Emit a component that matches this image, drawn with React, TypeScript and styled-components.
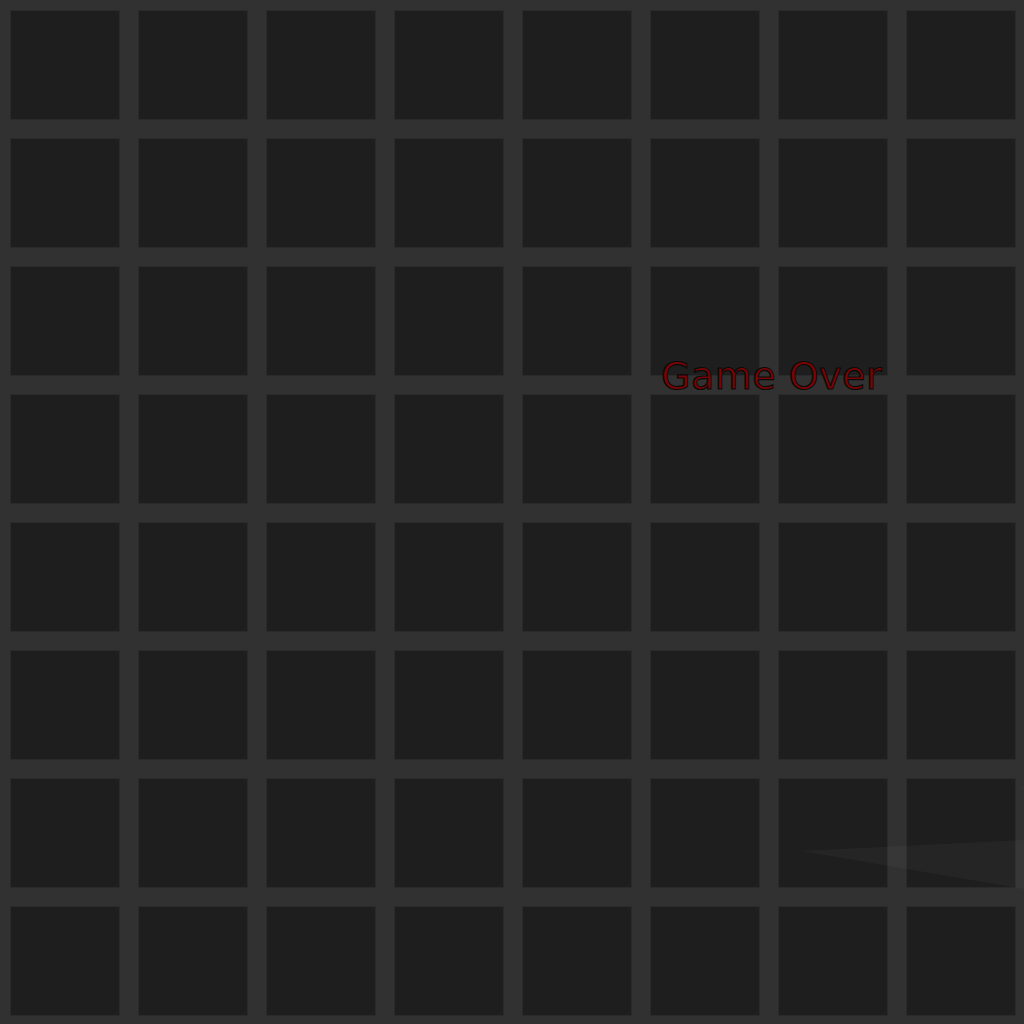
import React from "react";
import styled, { createGlobalStyle } from "styled-components";

const Global = createGlobalStyle`
  html, body { margin: 0; padding: 0; background: #313131; }
  body { width: 1024px; height: 1024px; overflow: hidden; }
`;

const Board = styled.div`
  position: relative;
  width: 1024px;
  height: 1024px;
  box-sizing: border-box;
  padding: 11px 9px 9px 11px;
  background: #313131;
  display: grid;
  grid-template-columns: repeat(8, 108px);
  grid-template-rows: repeat(8, 108px);
  gap: 20px;
`;

const Cell = styled.div`
  background: #1e1e1e;
  box-shadow: 0 0 0 1px #2a2a2a;
`;

const Message = styled.div`
  position: absolute;
  left: 661px;
  top: 350px;
  font-family: "DejaVu Sans", "Noto Sans", sans-serif;
  font-size: 38px;
  line-height: 52px;
  color: #7a0404;
  -webkit-text-stroke: 1.2px #0a0a0a;
  letter-spacing: 0.5px;
  white-space: nowrap;
`;

const Beam = styled.svg`
  position: absolute;
  left: 0;
  top: 0;
  pointer-events: none;
`;

export default function App() {
  const cells = Array.from({ length: 64 }, (_, i) => i);
  return (
    <>
      <Global />
      <Board>
        {cells.map((i) => (
          <Cell key={i} />
        ))}
        <Beam width="1024" height="1024" viewBox="0 0 1024 1024">
          <polygon points="801,851 1024,840 1024,889" fill="rgba(255,255,255,0.03)" />
          <polygon points="1017,785 1024,788 1024,790" fill="rgba(255,255,255,0.03)" />
        </Beam>
        <Message>Game Over</Message>
      </Board>
    </>
  );
}
